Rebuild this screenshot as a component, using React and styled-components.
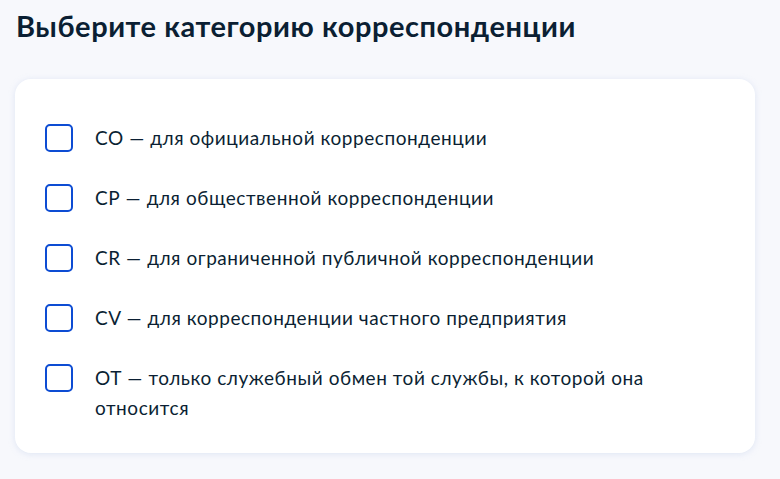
import styled, { createGlobalStyle } from 'styled-components';

const GlobalStyle = createGlobalStyle`
    html, body {
        margin: 0;
        padding: 0;
        background: #F7F8FC;
        font-family: 'Lato', 'Liberation Sans', sans-serif;
        color: #0B1F33;
    }
    * {
        box-sizing: border-box;
    }
`

const categories = [
    'СО — для официальной корреспонденции',
    'СР — для общественной корреспонденции',
    'CR — для ограниченной публичной корреспонденции',
    'CV — для корреспонденции частного предприятия',
    'ОТ — только служебный обмен той службы, к которой она относится',
]

export default function App(){
    return(
        <Page>
            <GlobalStyle />
            <Title>Выберите категорию корреспонденции</Title>
            <Card>
                {categories.map(label =>
                    <Option key={label}>
                        <Box type="checkbox" />
                        <Label>{label}</Label>
                    </Option>
                )}
            </Card>
        </Page>
    )
}

const Page = styled.div`
    width: 780px;
    min-height: 479px;
    padding: 8px 25px 0 15px;
`

const Title = styled.h1`
    margin: 0 0 35px 1px;
    font-size: 29px;
    line-height: 36px;
    letter-spacing: 0.55px;
    font-weight: 700;
    color: #0B1F33;
`

const Card = styled.div`
    width: 740px;
    background: #FFFFFF;
    border-radius: 16px;
    box-shadow: 0 1px 6px rgba(179, 196, 230, 0.35);
    padding: 44px 32px 30px 30px;
    display: flex;
    flex-direction: column;
    gap: 30px;
`

const Option = styled.label`
    display: flex;
    align-items: flex-start;
    gap: 22px;
    cursor: pointer;
`

const Box = styled.input`
    appearance: none;
    flex: 0 0 auto;
    width: 28px;
    height: 28px;
    margin: 1px 0 0 0;
    border: 2px solid #0D4CD3;
    border-radius: 5px;
    background: #FFFFFF;
`

const Label = styled.span`
    font-size: 19px;
    line-height: 30px;
    letter-spacing: 0.55px;
    color: #0B1F33;
    max-width: 600px;
`
